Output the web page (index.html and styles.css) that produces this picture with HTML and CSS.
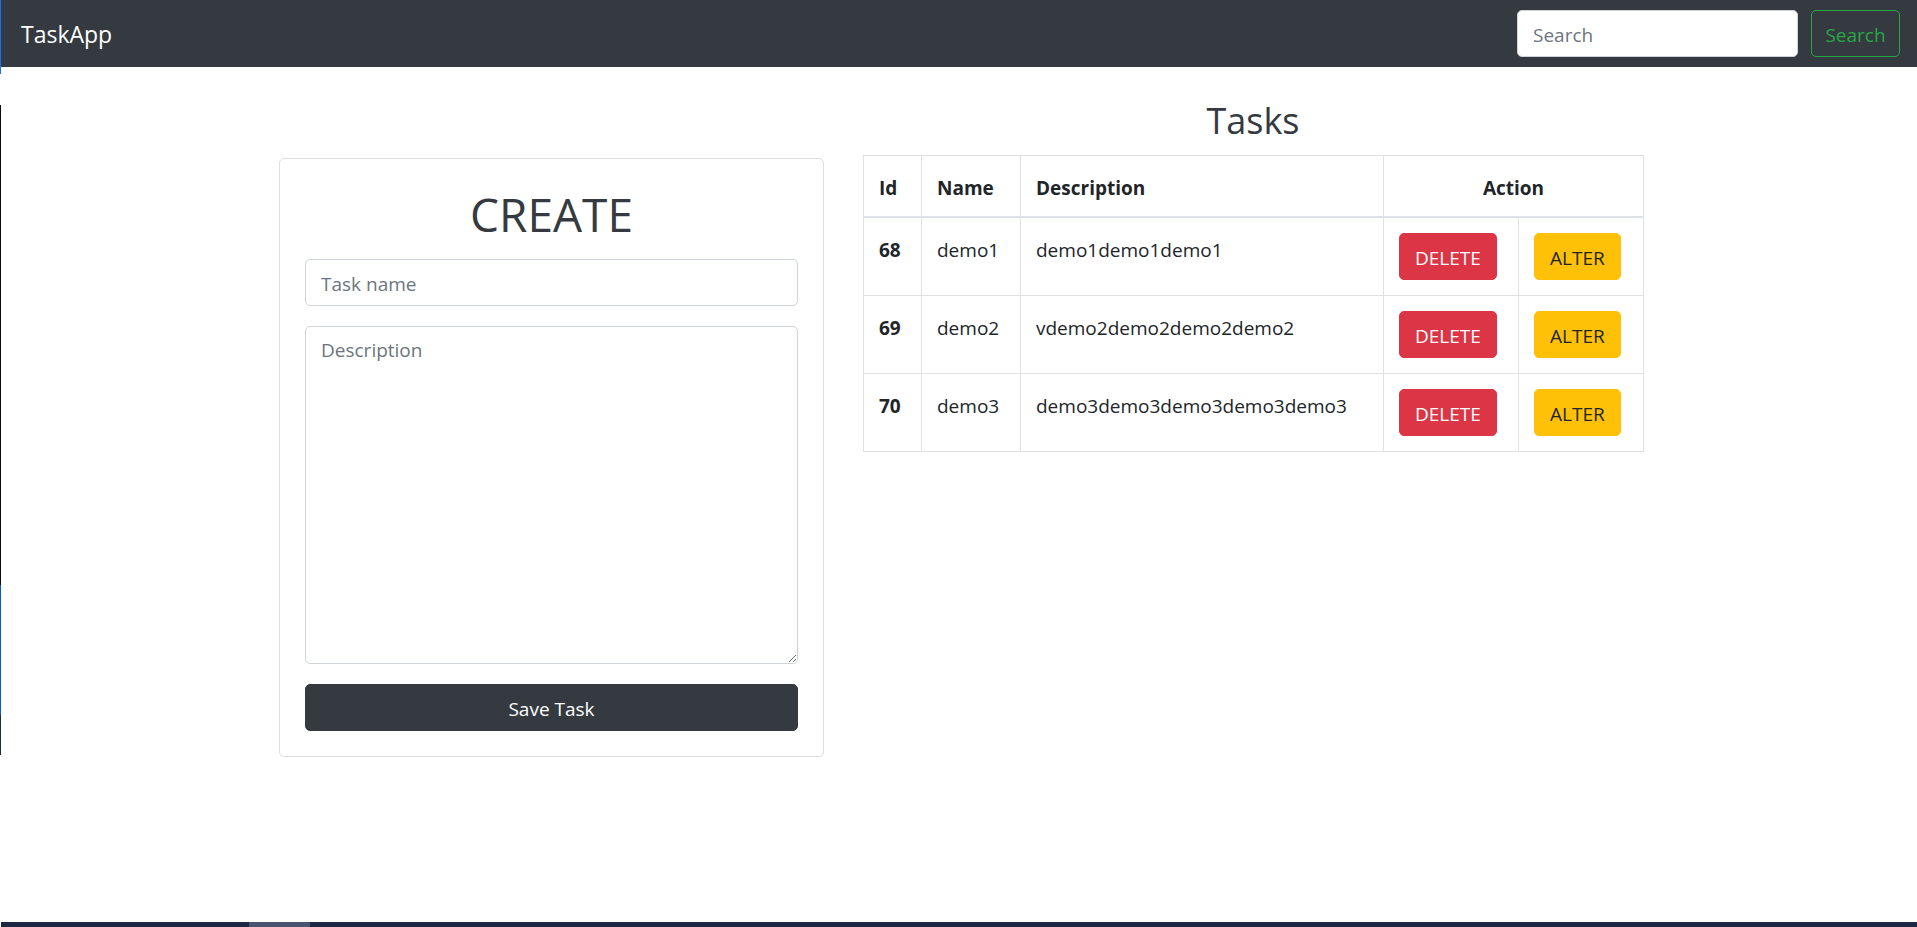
FILE: index.html
```html
<!DOCTYPE html>
<html lang="en">
<head>
<meta charset="utf-8">
<title>TaskApp</title>
<link rel="stylesheet" href="styles.css">
</head>
<body>
<nav class="navbar">
  <a class="brand" href="#">TaskApp</a>
  <form class="nav-search">
    <input class="nav-input" type="text" placeholder="Search">
    <button class="btn-search" type="button">Search</button>
  </form>
</nav>

<main class="main">
  <section class="left-col">
    <div class="card">
      <h1 class="create-title">CREATE</h1>
      <form class="create-form">
        <input class="field" type="text" placeholder="Task name">
        <textarea class="field area" placeholder="Description"></textarea>
        <button class="btn-save" type="button">Save Task</button>
      </form>
    </div>
  </section>
  <section class="right-col">
    <h2 class="tasks-title">Tasks</h2>
    <table class="tasks">
      <colgroup>
        <col class="c-id"><col class="c-name"><col class="c-desc"><col class="c-del"><col class="c-alt">
      </colgroup>
      <thead>
        <tr><th>Id</th><th>Name</th><th>Description</th><th colspan="2" class="center">Action</th></tr>
      </thead>
      <tbody>
        <tr><td class="id">68</td><td>demo1</td><td>demo1demo1demo1</td><td class="act"><button class="btn btn-del" type="button">DELETE</button></td><td class="act"><button class="btn btn-alt" type="button">ALTER</button></td></tr>
        <tr><td class="id">69</td><td>demo2</td><td>vdemo2demo2demo2demo2</td><td class="act"><button class="btn btn-del" type="button">DELETE</button></td><td class="act"><button class="btn btn-alt" type="button">ALTER</button></td></tr>
        <tr><td class="id">70</td><td>demo3</td><td>demo3demo3demo3demo3demo3</td><td class="act"><button class="btn btn-del" type="button">DELETE</button></td><td class="act"><button class="btn btn-alt" type="button">ALTER</button></td></tr>
      </tbody>
    </table>
  </section>
</main>

<div class="edge edge-blue-top"></div>
<div class="edge edge-black"></div>
<div class="edge edge-blue"></div>
<div class="edge edge-dark"></div>
<div class="taskbar"><span class="taskbar-seg"></span></div>
</body>
</html>
```

FILE: styles.css
```css
* { box-sizing: border-box; }

html, body {
  margin: 0;
  padding: 0;
  background: #fff;
}

body {
  font-family: "Open Sans", "Noto Sans", sans-serif;
  font-size: 19px;
  line-height: 30px;
  color: #212529;
  min-height: 927px;
  position: relative;
  overflow: hidden;
}

/* Navbar */
.navbar {
  height: 67px;
  background: #343a40;
  display: flex;
  align-items: center;
  justify-content: space-between;
  padding: 0 17px 0 21px;
}

.brand {
  color: #fff;
  text-decoration: none;
  font-size: 23px;
  line-height: 30px;
}

.nav-search {
  display: flex;
  align-items: center;
  gap: 13px;
  margin: 0;
}

.nav-input {
  width: 281px;
  height: 47px;
  border: 1px solid #ced4da;
  border-radius: 5px;
  padding: 8px 15px 6px;
  font-family: inherit;
  font-size: 19px;
  color: #495057;
  background: #fff;
}

.nav-input::placeholder { color: #6c757d; }

.btn-search {
  width: 89px;
  height: 47px;
  border: 1px solid #28a745;
  border-radius: 5px;
  background: transparent;
  color: #28a745;
  font-family: inherit;
  font-size: 19px;
  padding: 2px 0 0;
}

/* Main layout */
.main {
  width: 1369px;
  margin: 30px auto 0;
  padding-left: 5px;
  display: flex;
  align-items: flex-start;
  gap: 39px;
}

.left-col {
  width: 545px;
  flex: none;
  padding-top: 61px;
}

.right-col {
  width: 780px;
  flex: none;
}

/* Card */
.card {
  border: 1px solid #dfdfdf;
  border-radius: 5px;
  padding: 25px;
}

.create-title {
  margin: 0 0 15px;
  height: 60px;
  font-size: 46px;
  line-height: 60px;
  font-weight: 400;
  text-align: center;
  color: #343a40;
}

.create-form {
  display: flex;
  flex-direction: column;
  gap: 20px;
  margin: 0;
}

.field {
  display: block;
  width: 100%;
  height: 47px;
  border: 1px solid #ced4da;
  border-radius: 5px;
  padding: 8px 15px 6px;
  font-family: inherit;
  font-size: 19px;
  line-height: 30px;
  color: #495057;
  background: #fff;
}

.field::placeholder { color: #6c757d; }

.area {
  height: 338px;
  resize: vertical;
}

.btn-save {
  height: 47px;
  width: 100%;
  border: 1px solid #343a40;
  border-radius: 5px;
  background: #343a40;
  color: #fff;
  font-family: inherit;
  font-size: 19px;
  line-height: 30px;
  padding: 9px 0 6px;
}

/* Tasks table */
.tasks-title {
  margin: 0 0 10px;
  height: 48px;
  font-size: 36px;
  line-height: 48px;
  font-weight: 400;
  text-align: center;
  color: #343a40;
}

.tasks {
  width: 780px;
  border-collapse: collapse;
  table-layout: fixed;
}

.c-id { width: 58px; }
.c-name { width: 99px; }
.c-desc { width: 363px; }
.c-del { width: 135px; }
.c-alt { width: 125px; }

.tasks th,
.tasks td {
  border: 1px solid #dee2e6;
  padding: 17px 15px 13px;
  text-align: left;
  vertical-align: top;
  white-space: nowrap;
}

.tasks td.act {
  padding: 15px;
}

.tasks thead th {
  font-weight: 700;
  border-bottom: 2px solid #dee2e6;
  vertical-align: bottom;
}

.tasks th.center { text-align: center; }

.tasks td.id { font-weight: 700; }

.btn {
  display: inline-block;
  height: 47px;
  padding: 9px 15px 6px;
  border: 1px solid transparent;
  border-radius: 5px;
  font-family: inherit;
  font-size: 19px;
  line-height: 30px;
}

.btn-del {
  background: #dc3545;
  border-color: #dc3545;
  color: #fff;
}

.btn-alt {
  background: #ffc107;
  border-color: #ffc107;
  color: #212529;
}

/* Screen capture edge artifacts */
.edge {
  position: absolute;
  left: 0;
  width: 1px;
}

.edge-blue-top { top: 0; height: 74px; background: #1f6fe5; }
.edge-black { top: 105px; height: 480px; background: #0a0a0a; }
.edge-blue { top: 585px; height: 130px; background: #0b57d0; }
.edge-dark { top: 715px; height: 40px; background: #1e2a3a; }

.taskbar {
  position: absolute;
  left: 1px;
  right: 0;
  top: 922px;
  height: 5px;
  background: #1b2743;
}

.taskbar-seg {
  position: absolute;
  left: 248px;
  width: 61px;
  top: 0;
  bottom: 0;
  background: #4a5370;
}
```
